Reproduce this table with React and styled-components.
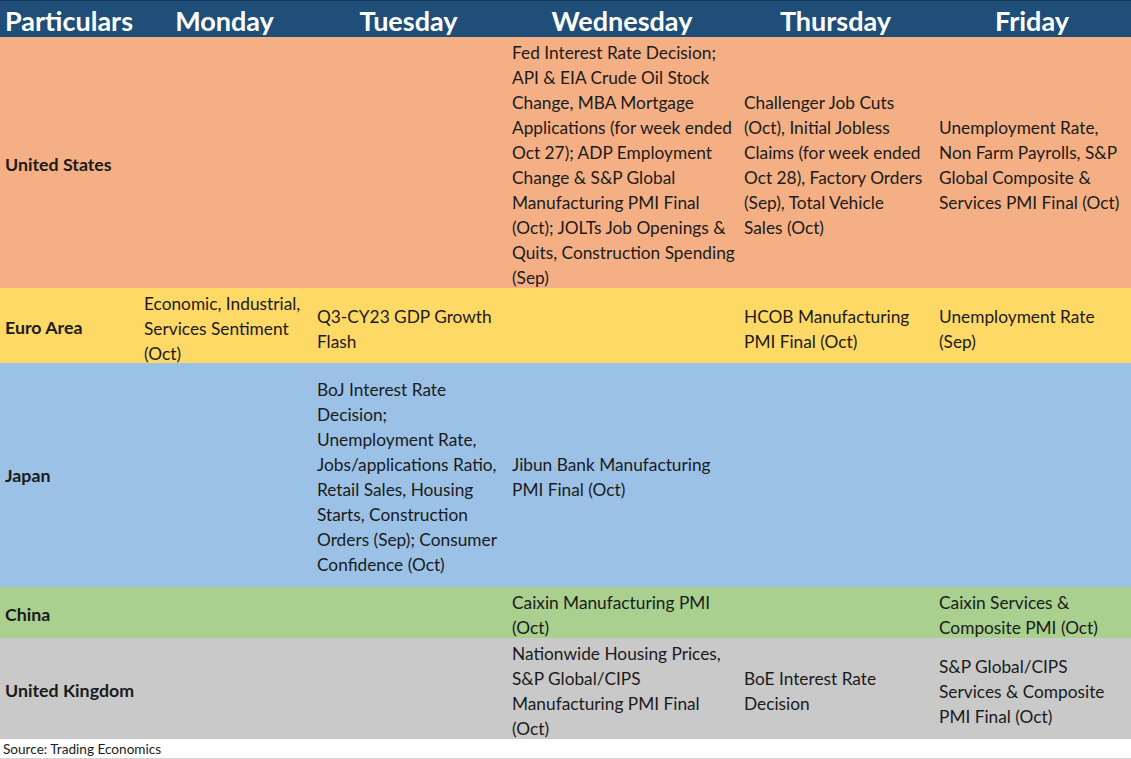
import styled, { createGlobalStyle } from 'styled-components';

const GlobalStyle = createGlobalStyle`
  html, body { margin: 0; padding: 0; background: #fff; }
  body { font-family: Lato, "Open Sans", sans-serif; color: #1b1b1b; }
`;

const COLS = '138px 173px 195px 232px 195px 198px';
const DAYS = ['Particulars', 'Monday', 'Tuesday', 'Wednesday', 'Thursday', 'Friday'];

const rows = [
  {
    name: 'United States', bg: '#f4b084', h: 251,
    cells: [
      [],
      [],
      ['Fed Interest Rate Decision;', 'API & EIA Crude Oil Stock', 'Change, MBA Mortgage', 'Applications (for week ended', 'Oct 27); ADP Employment', 'Change & S&P Global', 'Manufacturing PMI Final', '(Oct); JOLTs Job Openings &', 'Quits, Construction Spending', '(Sep)'],
      ['Challenger Job Cuts', '(Oct), Initial Jobless', 'Claims (for week ended', 'Oct 28), Factory Orders', '(Sep), Total Vehicle', 'Sales (Oct)'],
      ['Unemployment Rate,', 'Non Farm Payrolls, S&P', 'Global Composite &', 'Services PMI Final (Oct)'],
    ],
  },
  {
    name: 'Euro Area', bg: '#ffd966', h: 75,
    cells: [
      ['Economic, Industrial,', 'Services Sentiment', '(Oct)'],
      ['Q3-CY23 GDP Growth', 'Flash'],
      [],
      ['HCOB Manufacturing', 'PMI Final (Oct)'],
      ['Unemployment Rate', '(Sep)'],
    ],
  },
  {
    name: 'Japan', bg: '#9bc2e6', h: 224,
    cells: [
      [],
      ['BoJ Interest Rate', 'Decision;', 'Unemployment Rate,', 'Jobs/applications Ratio,', 'Retail Sales, Housing', 'Starts, Construction', 'Orders (Sep); Consumer', 'Confidence (Oct)'],
      ['Jibun Bank Manufacturing', 'PMI Final (Oct)'],
      [],
      [],
    ],
  },
  {
    name: 'China', bg: '#a9d08e', h: 51,
    cells: [
      [],
      [],
      ['Caixin Manufacturing PMI', '(Oct)'],
      [],
      ['Caixin Services &', 'Composite PMI (Oct)'],
    ],
  },
  {
    name: 'United Kingdom', bg: '#c9c9c9', h: 101,
    cells: [
      [],
      [],
      ['Nationwide Housing Prices,', 'S&P Global/CIPS', 'Manufacturing PMI Final', '(Oct)'],
      ['BoE Interest Rate', 'Decision'],
      ['S&P Global/CIPS', 'Services & Composite', 'PMI Final (Oct)'],
    ],
  },
];

export default function App() {
  return (
    <>
      <GlobalStyle />
      <Sheet>
        <HeaderRow>
          {DAYS.map((d) => <HeadCell key={d}>{d}</HeadCell>)}
        </HeaderRow>
        {rows.map((row) => (
          <Row key={row.name} $bg={row.bg} $h={row.h}>
            <Label>{row.name}</Label>
            {row.cells.map((lines, i) => (
              <Cell key={i}>
                {lines.map((l, j) => <Line key={j}>{l}</Line>)}
              </Cell>
            ))}
          </Row>
        ))}
        <Source>Source: Trading Economics</Source>
      </Sheet>
    </>
  );
}

const Sheet = styled.div`
  width: 1131px;
  height: 759px;
  display: flex;
  flex-direction: column;
  overflow: hidden;
`;

const HeaderRow = styled.div`
  display: grid;
  grid-template-columns: ${COLS};
  height: 37px;
  background: #1f4e78;
  border-top: 1px solid #16395a;
  box-sizing: border-box;
`;

const HeadCell = styled.div`
  display: flex;
  align-items: center;
  justify-content: center;
  padding-top: 2px;
  color: #fff;
  font-family: Lato, "Open Sans", sans-serif;
  font-weight: 700;
  font-size: 27px;
  white-space: nowrap;
`;

const Row = styled.div`
  display: grid;
  grid-template-columns: ${COLS};
  height: ${({ $h }) => $h}px;
  background: ${({ $bg }) => $bg};
`;

const Cell = styled.div`
  display: flex;
  flex-direction: column;
  justify-content: center;
  padding: 3px 0 0 6px;
  font-size: 17.3px;
  line-height: 25px;
  white-space: nowrap;
`;

const Label = styled(Cell)`
  padding: 1px 0 0 5px;
  font-weight: 700;
  font-size: 17.8px;
`;

const Line = styled.span`
  display: block;
`;

const Source = styled.div`
  flex: 1;
  display: flex;
  align-items: center;
  padding-left: 3px;
  font-size: 13.6px;
  background: #fff;
  border-bottom: 1px solid #d4d4d4;
`;
